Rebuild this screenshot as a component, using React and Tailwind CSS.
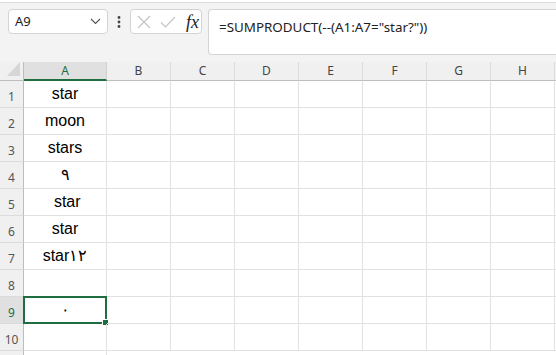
import React from "react";

const cols = ["A", "B", "C", "D", "E", "F", "G", "H"];
const colW = ["w-[83px]", "w-[64px]", "w-[64px]", "w-[64px]", "w-[64px]", "w-[64px]", "w-[64px]", "w-[64px]"];

const values = ["star", "moon", "stars", "٩", " star", "star", "star١٢", "", "٠", ""];

const Chevron = () => (
  <svg width="11" height="7" viewBox="0 0 11 7" fill="none">
    <path d="M1 1l4.5 4.5L10 1" stroke="#555" strokeWidth="1.2" />
  </svg>
);

const Dots = () => (
  <svg width="4" height="12" viewBox="0 0 4 12">
    <circle cx="2" cy="1.5" r="1.4" fill="#444" />
    <circle cx="2" cy="6" r="1.4" fill="#444" />
    <circle cx="2" cy="10.5" r="1.4" fill="#444" />
  </svg>
);

const Cross = () => (
  <svg width="14" height="14" viewBox="0 0 14 14" fill="none">
    <path d="M1 1l12 12M13 1L1 13" stroke="#c4c4c4" strokeWidth="1.1" />
  </svg>
);

const Check = () => (
  <svg width="16" height="12" viewBox="0 0 16 12" fill="none">
    <path d="M1 6.5l4.5 4.5L15 1" stroke="#c4c4c4" strokeWidth="1.1" />
  </svg>
);

const Corner = () => (
  <svg width="13" height="14" viewBox="0 0 13 14">
    <path d="M13 0v14H0z" fill="#d6d6d6" />
  </svg>
);

export default function App() {
  return (
    <div className="w-[556px] h-[355px] overflow-hidden bg-[#f3f3f3] font-['Liberation_Sans',sans-serif] text-[#222]">
      {/* top strip */}
      <div className="h-[3px] bg-white border-b border-[#dcdcdc]" />

      {/* formula toolbar */}
      <div className="flex items-start h-[59px] pt-[6px]">
        <div className="ml-[8px] w-[100px] h-[25px] flex items-center justify-between px-[6px] bg-white border border-[#d4d4d4] rounded-[4px]">
          <span className="font-['Noto_Sans',sans-serif] text-[13px] text-[#222]">A9</span>
          <Chevron />
        </div>
        <div className="w-[22px] h-[25px] flex items-center justify-center">
          <Dots />
        </div>
        <div className="w-[72px] h-[25px] flex items-center gap-[9px] pl-[6px] bg-white border border-[#d4d4d4] rounded-[4px]">
          <Cross />
          <Check />
          <span className="ml-[1px] font-['Liberation_Serif',serif] italic text-[18px] leading-none text-[#222]">fx</span>
        </div>
        <div className="ml-[6px] flex-1 h-[46px] bg-white border border-r-0 border-[#d4d4d4] rounded-l-[4px] pl-[10px] pt-[5px]">
          <span className="font-['Noto_Sans',sans-serif] text-[13.4px] text-[#222]">
            =SUMPRODUCT(--(A1:A7="star?"))
          </span>
        </div>
      </div>

      {/* column headers */}
      <div className="flex h-[19px] bg-[#f0f0f0]">
        <div className="w-[24px] flex items-end justify-end pr-[3px] pb-[4px] border-r border-b border-[#bdbdbd]">
          <Corner />
        </div>
        {cols.map((c, i) => (
          <div
            key={c}
            className={`${colW[i]} shrink-0 flex items-center justify-center text-[12px] font-['Noto_Sans',sans-serif] border-r ${
              i === 0
                ? "bg-[#e0e0e0] text-[#1e6e42] border-b-2 border-b-[#1e6e42] border-r-[#cfcfcf]"
                : "text-[#444] border-b border-b-[#bdbdbd] border-r-[#dcdcdc]"
            }`}
          >
            {c}
          </div>
        ))}
        <div className="flex-1 border-b border-[#bdbdbd]" />
      </div>

      {/* rows */}
      {values.map((v, r) => (
        <div key={r} className="flex h-[27px] bg-white">
          <div
            className={`w-[24px] shrink-0 flex items-end justify-center pb-[4px] text-[12px] font-['Noto_Sans',sans-serif] leading-none border-r border-[#bdbdbd] border-b border-b-[#dcdcdc] ${
              r === 8 ? "bg-[#e0e0e0] text-[#1e6e42]" : "bg-[#f0f0f0] text-[#555]"
            }`}
          >
            {r + 1}
          </div>
          {cols.map((c, i) => (
            <div
              key={c}
              className={`${colW[i]} shrink-0 relative border-r border-b border-[#e1e1e1] ${
                i === 0 ? "flex items-end justify-center pb-[5px]" : ""
              }`}
            >
              {i === 0 && (
                <span className="text-[16px] leading-none whitespace-pre text-black">{v}</span>
              )}
              {i === 0 && r === 8 && (
                <>
                  <div className="absolute -left-[1px] -top-[1px] -right-[1px] -bottom-[1px] border-2 border-[#1e6e42]" />
                  <div className="absolute -right-[3px] -bottom-[3px] w-[5px] h-[5px] bg-[#1e6e42] border border-white box-content" />
                </>
              )}
            </div>
          ))}
          <div className="flex-1 border-b border-[#e1e1e1]" />
        </div>
      ))}
      <div className="flex h-[4px] bg-white">
        <div className="w-[24px] bg-[#f0f0f0] border-r border-[#bdbdbd]" />
        <div className="w-[83px] border-r border-[#e1e1e1]" />
      </div>
    </div>
  );
}
